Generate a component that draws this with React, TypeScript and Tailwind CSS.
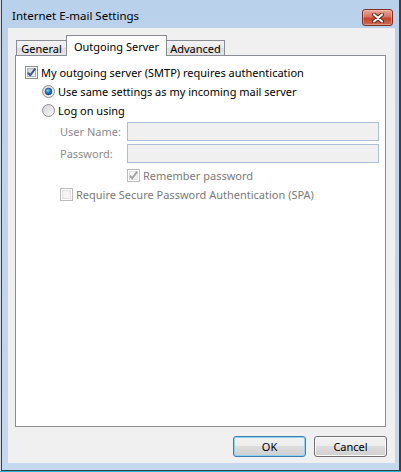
import React from "react";

type BoxProps = { checked?: boolean; disabled?: boolean };

const CheckBox: React.FC<BoxProps> = ({ checked, disabled }) => (
  <svg width="13" height="13" viewBox="0 0 13 13" className="shrink-0">
    <defs>
      <linearGradient id="cbIn" x1="0" y1="0" x2="1" y2="1">
        <stop offset="0" stopColor="#cbcfd5" />
        <stop offset="1" stopColor="#f7f7f7" />
      </linearGradient>
    </defs>
    <rect x="0.5" y="0.5" width="12" height="12" fill="#fff" stroke={disabled ? "#bcbcbc" : "#8e8f8f"} />
    <rect
      x="2.5"
      y="2.5"
      width="8"
      height="8"
      fill={disabled ? "#f4f4f4" : "url(#cbIn)"}
      stroke={disabled ? "#e2e2e2" : "#b0b5bb"}
    />
    {checked && (
      <path
        d="M2.8 6.6 L5.2 9.2 L10.2 2.6"
        fill="none"
        stroke={disabled ? "#a2a2a2" : "#3c5294"}
        strokeWidth="1.9"
      />
    )}
  </svg>
);

const Radio: React.FC<BoxProps> = ({ checked }) => (
  <svg width="13" height="13" viewBox="0 0 13 13" className="shrink-0">
    <defs>
      <linearGradient id="rdIn" x1="0" y1="0" x2="1" y2="1">
        <stop offset="0" stopColor="#cfd2d6" />
        <stop offset="1" stopColor="#fbfbfb" />
      </linearGradient>
      <radialGradient id="rdDot" cx="0.4" cy="0.35" r="0.7">
        <stop offset="0" stopColor="#8ad2f8" />
        <stop offset="0.55" stopColor="#1c74c4" />
        <stop offset="1" stopColor="#0b3e7d" />
      </radialGradient>
    </defs>
    <circle cx="6.5" cy="6.5" r="6" fill="url(#rdIn)" stroke="#8e8f8f" />
    {checked && <circle cx="6.5" cy="6.5" r="3.4" fill="url(#rdDot)" stroke="#1d3f6c" strokeWidth="0.6" />}
  </svg>
);

const tabBg =
  "bg-[linear-gradient(180deg,#f3f3f3_0%,#ebebeb_50%,#dddddd_50%,#e5e5e5_100%)]";

const App: React.FC = () => {
  return (
    <div className="w-[401px] h-[472px] flex flex-col bg-[#d6dbe1] font-['Noto_Sans',sans-serif] text-[11px] leading-none text-black select-none">
      <div className="flex-1 ml-px border-l border-r-2 border-b border-[#34404a] flex flex-col bg-[linear-gradient(180deg,#b9d1ea_0%,#c4d8ee_100%)] pl-[6px] pr-[4px] pb-[7px]">
        {/* title bar */}
        <div className="h-[28px] flex justify-between pl-[4px] pr-[2px]">
          <span className="mt-[10px] text-[11.5px] text-black">Internet E-mail Settings</span>
          <div className="mt-[9px] w-[31px] h-[17px] rounded-[3px] border border-[#7a2e24] bg-[linear-gradient(180deg,#eaa696_0%,#d8735f_45%,#c4432d_55%,#cf6a52_100%)] shadow-[inset_0_0_0_1px_rgba(255,255,255,0.3)] flex items-center justify-center">
            <svg width="12" height="10" viewBox="0 0 12 10">
              <path d="M2 1.5 L10 8.5 M10 1.5 L2 8.5" stroke="#5a1f18" strokeWidth="4" strokeLinecap="round" />
              <path d="M2 1.5 L10 8.5 M10 1.5 L2 8.5" stroke="#fff" strokeWidth="2.2" strokeLinecap="round" />
            </svg>
          </div>
        </div>

        {/* client area */}
        <div className="flex-1 bg-[#f0f0f0] flex flex-col pt-[7px]">
          <div className="flex items-end h-[20px] ml-[8px]">
            <div className={`w-[50px] h-[15px] border-l border-t border-[#898c95] ${tabBg} flex items-center justify-center pt-px`}>
              General
            </div>
            <div className="relative z-10 w-[101px] h-[21px] -mb-px border-l border-t border-r border-[#898c95] bg-white flex justify-center pt-[5px]">
              Outgoing Server
            </div>
            <div className={`w-[58px] h-[15px] border-t border-r border-[#898c95] ${tabBg} flex items-center justify-center pt-px`}>
              Advanced
            </div>
          </div>

          {/* tab pane */}
          <div className="ml-[7px] w-[371px] h-[372px] border border-[#898c95] bg-white flex flex-col pt-[7px]">
            <div className="h-[19px] flex items-center pl-[9px] gap-[3px]">
              <CheckBox checked />
              <span>My outgoing server (SMTP) requires authentication</span>
            </div>
            <div className="h-[19px] flex items-center pl-[26px] gap-[3px]">
              <Radio checked />
              <span>Use same settings as my incoming mail server</span>
            </div>
            <div className="h-[19px] flex items-center pl-[26px] gap-[3px]">
              <Radio />
              <span>Log on using</span>
            </div>

            <div className="mt-[2px] h-[19px] flex items-center pl-[44px] text-[#8a8a8a]">
              <span className="w-[67px]">User Name:</span>
              <div className="w-[252px] h-[19px] border border-[#abbed6] bg-[#f0f0f0]" />
            </div>
            <div className="mt-[3px] h-[19px] flex items-center pl-[44px] text-[#8a8a8a]">
              <span className="w-[67px]">Password:</span>
              <div className="w-[252px] h-[19px] border border-[#abbed6] bg-[#f0f0f0]" />
            </div>

            <div className="mt-[3px] h-[19px] flex items-center pl-[111px] gap-[3px] text-[#7a7a7a]">
              <CheckBox checked disabled />
              <span>Remember password</span>
            </div>
            <div className="h-[19px] flex items-center pl-[44px] gap-[3px] text-[#7a7a7a]">
              <CheckBox disabled />
              <span>Require Secure Password Authentication (SPA)</span>
            </div>
          </div>

          {/* buttons */}
          <div className="mt-[9px] flex justify-end gap-[8px] pr-[8px]">
            <button className="w-[73px] h-[21px] rounded-[3px] border border-[#3c7fb1] shadow-[inset_0_0_0_1px_#8fd3f3] bg-[linear-gradient(180deg,#f2f2f2_0%,#ebebeb_50%,#dddddd_50%,#cfcfcf_100%)] text-[11px] leading-none">
              OK
            </button>
            <button className="w-[73px] h-[21px] rounded-[3px] border border-[#707070] shadow-[inset_0_0_0_1px_#fcfcfc] bg-[linear-gradient(180deg,#f2f2f2_0%,#ebebeb_50%,#dddddd_50%,#cfcfcf_100%)] text-[11px] leading-none">
              Cancel
            </button>
          </div>
        </div>
      </div>
      <div className="h-px bg-[#22b6d6]" />
    </div>
  );
};

export default App;
